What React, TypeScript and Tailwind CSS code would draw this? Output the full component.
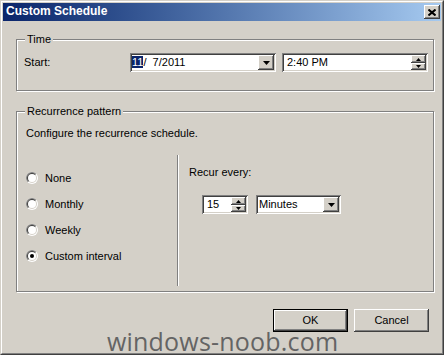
import React from 'react';

const raised =
  'shadow-[inset_-1px_-1px_0_#404040,inset_1px_1px_0_#fff,inset_-2px_-2px_0_#808080,inset_2px_2px_0_#d4d0c8]';
const sunken =
  'shadow-[inset_1px_1px_0_#808080,inset_-1px_-1px_0_#fff,inset_2px_2px_0_#404040,inset_-2px_-2px_0_#d4d0c8]';

const DropButton: React.FC = () => (
  <div className={`w-[16px] h-[15px] bg-[#d4d0c8] flex items-center justify-center ${raised}`}>
    <svg width="7" height="4" viewBox="0 0 7 4">
      <polygon points="0,0 7,0 3.5,4" fill="#000" />
    </svg>
  </div>
);

const SpinButtons: React.FC = () => (
  <div className="flex flex-col w-[15px] h-[15px]">
    <div className={`h-[8px] bg-[#d4d0c8] flex items-center justify-center ${raised}`}>
      <svg width="5" height="3" viewBox="0 0 5 3">
        <polygon points="2.5,0 5,3 0,3" fill="#000" />
      </svg>
    </div>
    <div className={`h-[7px] bg-[#d4d0c8] flex items-center justify-center ${raised}`}>
      <svg width="5" height="3" viewBox="0 0 5 3">
        <polygon points="0,0 5,0 2.5,3" fill="#000" />
      </svg>
    </div>
  </div>
);

const Radio: React.FC<{ label: string; checked?: boolean }> = ({ label, checked }) => (
  <div className="h-[26px] flex items-center">
    <svg width="12" height="12" viewBox="0 0 12 12">
      <circle cx="6" cy="6" r="6" fill="#fff" />
      <path d="M1.757 10.243 A6 6 0 0 1 10.243 1.757 Z" fill="#808080" />
      <circle cx="6" cy="6" r="5" fill="#d4d0c8" />
      <path d="M2.464 9.536 A5 5 0 0 1 9.536 2.464 Z" fill="#404040" />
      <circle cx="6" cy="6" r="4" fill="#fff" />
      {checked && <circle cx="6" cy="6" r="2" fill="#000" />}
    </svg>
    <span className="ml-[7px]">{label}</span>
  </div>
);

const Button: React.FC<{ label: string; primary?: boolean }> = ({ label, primary }) => (
  <div className={`w-[75px] h-[23px] ${primary ? 'border border-black' : ''}`}>
    <div className={`w-full h-full bg-[#d4d0c8] flex items-center justify-center ${raised}`}>{label}</div>
  </div>
);

const groupBox =
  'border border-[#808080] shadow-[1px_1px_0_#fff,inset_1px_1px_0_#fff] min-w-0';
const legend = 'ml-[8px] px-[2px] leading-[13px] bg-[#d4d0c8]';

export default function App() {
  return (
    <div
      className="relative w-[444px] h-[355px] bg-[#d4d0c8] text-[11px] leading-[13px] text-black overflow-hidden"
      style={{ fontFamily: '"Liberation Sans", Arial, sans-serif' }}
    >
      <div className="h-full border border-t-[#d4d0c8] border-l-[#d4d0c8] border-r-[#404040] border-b-[#404040]">
        <div className="h-full border border-t-white border-l-white border-r-[#808080] border-b-[#808080] p-px">
          {/* title bar */}
          <div className="h-[18px] flex items-center justify-between bg-gradient-to-r from-[#0a246a] to-[#a6caf0]">
            <span className="pl-[3px] pb-[2px] text-[12px] font-bold text-white">Custom Schedule</span>
            <div className={`mr-px w-[16px] h-[14px] bg-[#d4d0c8] flex items-center justify-center ${raised}`}>
              <svg width="8" height="7" viewBox="0 0 8 7">
                <path d="M0.5 0.5 L7.5 6.5 M7.5 0.5 L0.5 6.5" stroke="#000" strokeWidth="2" />
              </svg>
            </div>
          </div>

          <div className="pl-[13px] pr-[7px]">
            <fieldset className={`mt-[12px] ${groupBox}`}>
              <legend className={legend}>Time</legend>
              <div className="flex items-center pl-[7px] pt-[7px] pb-[18px]">
                <span className="w-[106px]">Start:</span>
                <div className={`w-[146px] h-[19px] bg-white p-[2px] flex items-center justify-between ${sunken}`}>
                  <span className="whitespace-pre">
                    <span className="bg-[#0a246a] text-white">11</span>/  7/2011
                  </span>
                  <DropButton />
                </div>
                <div className={`ml-[6px] w-[146px] h-[19px] bg-white p-[2px] flex items-center justify-between ${sunken}`}>
                  <span className="pl-[3px]">2:40 PM</span>
                  <SpinButtons />
                </div>
              </div>
            </fieldset>

            <fieldset className={`mt-[14px] ${groupBox}`}>
              <legend className={legend}>Recurrence pattern</legend>
              <p className="pl-[9px] mt-[9px]">Configure the recurrence schedule.</p>
              <div className="flex h-[131px] mt-[15px] mb-[5px]">
                <div className="w-[160px] pl-[9px] pt-[10px] flex flex-col">
                  <Radio label="None" />
                  <Radio label="Monthly" />
                  <Radio label="Weekly" />
                  <Radio label="Custom interval" checked />
                </div>
                <div className="border-l border-l-[#808080] border-r border-r-white" />
                <div className="pl-[10px] pt-[11px]">
                  <p>Recur every:</p>
                  <div className="flex items-center pl-[13px] mt-[16px] gap-[8px]">
                    <div className={`w-[46px] h-[19px] bg-white p-[2px] flex items-center justify-between ${sunken}`}>
                      <span className="pl-[3px]">15</span>
                      <SpinButtons />
                    </div>
                    <div className={`w-[85px] h-[19px] bg-white p-[2px] flex items-center justify-between ${sunken}`}>
                      <span className="pl-[1px]">Minutes</span>
                      <DropButton />
                    </div>
                  </div>
                </div>
              </div>
            </fieldset>

            <div className="flex justify-end gap-[6px] mt-[17px] pr-[5px]">
              <Button label="OK" primary />
              <Button label="Cancel" />
            </div>
          </div>
        </div>
      </div>

      {/* site watermark */}
      <div
        className="absolute left-[107px] top-[332px] text-[25px] leading-[18px] tracking-[0.2px] text-[#646464] pointer-events-none"
        style={{ fontFamily: '"Open Sans", sans-serif' }}
      >
        windows-noob.com
      </div>
    </div>
  );
}
